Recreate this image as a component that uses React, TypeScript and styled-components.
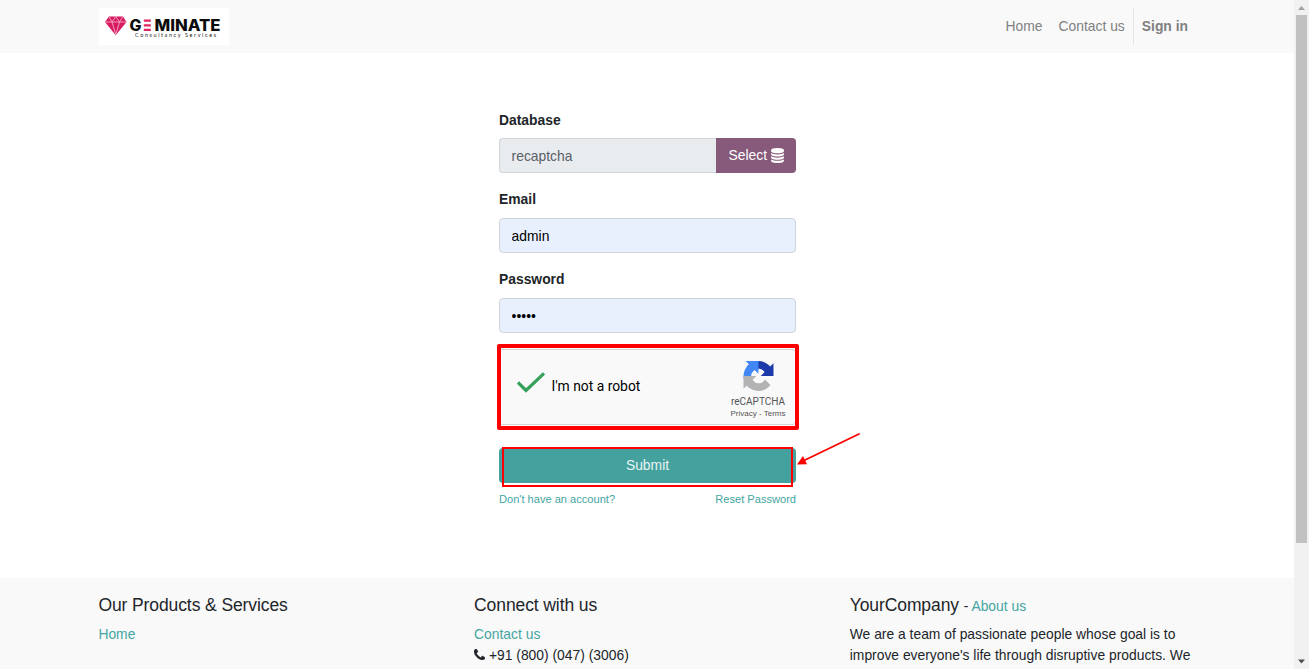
import React from "react";
import styled, { createGlobalStyle } from "styled-components";

const GlobalStyle = createGlobalStyle`
  *, *::before, *::after { box-sizing: border-box; }
  html, body { margin: 0; padding: 0; overflow: hidden; }
  body {
    font-family: "Liberation Sans", Arial, sans-serif;
    font-size: 13.86px;
    line-height: 21px;
    color: #212529;
    background: #fff;
  }
  button, input { font-family: inherit; }
`;

const Window = styled.div`
  display: flex;
  width: 1309px;
  height: 669px;
  overflow: hidden;
`;

const Page = styled.div`
  display: flex;
  flex-direction: column;
  width: 1294px;
  height: 669px;
  overflow: hidden;
`;

const Header = styled.header`
  display: flex;
  justify-content: space-between;
  align-items: flex-start;
  flex: none;
  height: 53px;
  padding: 8px 98px 0 98px;
  background: #f9f9f9;
`;

const Brand = styled.a`
  display: block;
  width: 130px;
  height: 37px;
  margin-left: 0.5px;
  background: #fff;
  svg { display: block; }
`;

const Nav = styled.nav`
  display: flex;
  height: 37px;
`;

const NavLink = styled.a<{ $strong?: boolean }>`
  padding: 8px;
  color: #808080;
  white-space: nowrap;
  font-weight: ${(p) => (p.$strong ? 700 : 400)};
  border-left: ${(p) => (p.$strong ? "1px solid #e6e6e6" : "0")};
`;

const Main = styled.main`
  display: flex;
  flex: none;
  height: 525px;
  padding: 57px 0 0 499px;
`;

const Form = styled.form`
  display: flex;
  flex-direction: column;
  width: 297px;
`;

const Field = styled.div`
  display: flex;
  flex-direction: column;
  height: 80px;

  & + & > label {
    margin-top: -1px;
    margin-bottom: 8px;
  }
`;

const Label = styled.label`
  height: 21px;
  margin-bottom: 7px;
  font-weight: 700;
`;

const InputGroup = styled.div`
  display: flex;
`;

const Input = styled.input<{ $locked?: boolean }>`
  flex: 1;
  min-width: 0;
  height: 35px;
  padding: 0 11.6px;
  font-size: 13.86px;
  border: 1px solid #ced4da;
  border-radius: ${(p) => (p.$locked ? "4px 0 0 4px" : "4px")};
  border-right-width: ${(p) => (p.$locked ? 0 : "1px")};
  color: ${(p) => (p.$locked ? "#5a6067" : "#000")};
  background: ${(p) => (p.$locked ? "#e9ecef" : "#e8f0fe")};
  outline: none;
`;

const SelectButton = styled.button`
  display: flex;
  align-items: center;
  justify-content: center;
  gap: 3.5px;
  width: 80px;
  height: 35px;
  padding: 0 0 1px;
  border: 0;
  border-radius: 0 4px 4px 0;
  color: #fff;
  font-size: 13.86px;
  background: #875a7b;
`;

const CaptchaWrap = styled.div`
  position: relative;
  height: 75px;
  margin-top: -1px;
`;

const Captcha = styled.div`
  display: flex;
  justify-content: space-between;
  height: 76px;
  border: 1px solid #d3d3d3;
  border-radius: 3px;
  background: #f9f9f9;
`;

const CaptchaCheck = styled.div`
  display: flex;
  align-items: center;
  gap: 6px;
  padding: 0 0 2px 16.5px;
  color: #000;
  font-family: Roboto, sans-serif;
  font-size: 13.86px;
  svg { margin-top: -6px; }
`;

const CaptchaBadge = styled.div`
  display: flex;
  flex-direction: column;
  align-items: center;
  width: 74px;
  padding-top: 11px;
  color: #555;
  svg { display: block; }
`;

const BadgeName = styled.div`
  margin-top: 4px;
  font-family: Roboto, sans-serif;
  font-size: 10px;
  line-height: 13px;
`;

const BadgeLinks = styled.div`
  margin-top: 1px;
  font-size: 8px;
  line-height: 10px;
  white-space: nowrap;
`;

const CaptchaHighlight = styled.div`
  position: absolute;
  left: -2px;
  top: -5px;
  width: 302px;
  height: 86px;
  border: 4px solid #f00;
  border-radius: 2px;
`;

const SubmitWrap = styled.div`
  position: relative;
  margin-top: 24px;
`;

const SubmitButton = styled.button`
  display: block;
  width: 297px;
  height: 35px;
  padding: 0 0 1px;
  border: 0;
  border-radius: 4px;
  color: #e9f5f4;
  font-size: 13.86px;
  background: #44a19e;
`;

const SubmitHighlight = styled.div`
  position: absolute;
  left: 3px;
  top: -1px;
  width: 291px;
  height: 40px;
  border: 2px solid #f00;
`;

const Arrow = styled.svg`
  position: absolute;
  left: 297px;
  top: -17px;
`;

const FormLinks = styled.div`
  display: flex;
  justify-content: space-between;
  margin-top: 8px;
  font-size: 11.09px;
  line-height: 16px;
`;

const Link = styled.a`
  color: #44a5a2;
`;

const Footer = styled.footer`
  display: flex;
  flex: none;
  height: 91px;
  padding: 17px 0 0 98.4px;
  background: #f9f9f9;
  overflow: hidden;
`;

const FooterColumn = styled.section`
  width: 375.7px;
  white-space: nowrap;
`;

const FooterTitle = styled.h5`
  height: 21px;
  margin: 0 0 8px;
  font-size: 17.5px;
  font-weight: 400;
  line-height: 20px;
  letter-spacing: -0.1px;
`;

const Small = styled.span`
  font-size: 13.86px;
  letter-spacing: 0;
`;

const Line = styled.div`
  height: 21px;
  svg { vertical-align: 0; }
`;

const Scrollbar = styled.div`
  display: flex;
  flex-direction: column;
  align-items: center;
  justify-content: space-between;
  width: 15px;
  height: 669px;
  background: #f1f1f1;
  svg { display: block; flex: none; }
`;

const ScrollThumb = styled.div`
  width: 11px;
  height: 528px;
  margin-bottom: auto;
  background: #c1c1c1;
`;

const Logo = () => (
  <svg width="130" height="37" viewBox="0.5 0 130 37">
    <path d="M10.5 8.5h14l3.5 5.5-10.8 13.3L6.5 14z" fill="#d81b60" />
    <path d="M6.5 14h21.5M10.5 8.5l3 5.5 3.8-5.5 3.7 5.5 3.5-5.5M13.5 14l3.8 12.5L21 14" fill="none" stroke="#f7a8c4" strokeWidth=".9" />
    <g fontFamily="Inter, sans-serif" fontWeight="800" fontSize="15.5" fill="#0c0c0c">
      <text x="31" y="23" textLength="12" lengthAdjust="spacingAndGlyphs">G</text>
      <text x="56" y="23" textLength="66" lengthAdjust="spacingAndGlyphs">MINATE</text>
    </g>
    <path d="M45.3 12.7h7M45.3 17.3h7M45.3 21.9h7" stroke="#e0245e" strokeWidth="2.2" />
    <text x="36.5" y="28.7" fontFamily="Lato, sans-serif" fontSize="5.4" fill="#222" textLength="81">
      Consultancy Services
    </text>
  </svg>
);

const DatabaseIcon = () => (
  <svg width="13" height="15" viewBox="0 0 1536 1792" fill="currentColor">
    <path d="M768 768q237 0 443-43t325-127v170q0 69-103 128t-280 93.500-385 34.500-385-34.500-280-93.500-103-128v-170q119 84 325 127t443 43zm0 768q237 0 443-43t325-127v170q0 69-103 128t-280 93.500-385 34.500-385-34.500-280-93.500-103-128v-170q119 84 325 127t443 43zm0-384q237 0 443-43t325-127v170q0 69-103 128t-280 93.500-385 34.500-385-34.500-280-93.500-103-128v-170q119 84 325 127t443 43zm0-1152q208 0 385 34.500t280 93.500 103 128v128q0 69-103 128t-280 93.500-385 34.500-385-34.500-280-93.500-103-128v-128q0-69 103-128t280-93.500 385-34.500z" />
  </svg>
);

const PhoneIcon = () => (
  <svg width="11" height="11" viewBox="192 128 1408 1408" fill="currentColor" stroke="currentColor" strokeWidth="50">
    <path d="M1600 1240q0 27-10 70.500t-21 68.500q-21 50-122 106-94 51-186 51-27 0-53-3.500t-57.500-12.500-47-14.500-55.500-20.500-49-18q-98-35-175-83-127-79-264-216t-216-264q-48-77-83-175-3-9-18-49t-20.500-55.500-14.500-47-12.500-57.500-3.500-53q0-92 51-186 56-101 106-122 25-11 68.500-21t70.500-10q14 0 21 3 18 6 53 76 11 19 30 54t35 63.500 31 53.500q3 4 17.500 25t21.500 35.500 7 28.500q0 20-28.500 50t-62 55-62 53-28.500 46q0 9 5 22.500t8.500 20.500 14 24 11.500 19q76 137 174 235t235 174q2 1 19 11.500t24 14 20.500 8.500 22.500 5q18 0 46-28.500t53-62 55-62 50-28.500q14 0 28.500 7t35.500 21.500 25 17.500q25 15 53.500 31t63.500 35 54 30q70 35 76 53 3 7 3 21z" />
  </svg>
);

const RecaptchaIcon = () => (
  <svg width="31" height="30" viewBox="0 0 64 64">
    <path fill="#1c3aa9" d="M64 31.955l-.033-1.370V4.687l-7.160 7.160C50.948 4.674 42.033.093 32.050.093c-10.400 0-19.622 4.960-25.458 12.640l11.736 11.860a15.550 15.550 0 0 1 4.754-5.334c2.050-1.600 4.952-2.906 8.968-2.906.485 0 .860.057 1.135.163 4.976.393 9.288 3.140 11.828 7.124l-8.307 8.307L64 31.953" />
    <path fill="#4285f4" d="M31.862.094l-1.370.033H4.594l7.160 7.160C4.580 13.147 0 22.060 0 32.046c0 10.400 4.960 19.622 12.640 25.458L24.500 45.768a15.550 15.550 0 0 1-5.334-4.754c-1.600-2.050-2.906-4.952-2.906-8.968 0-.485.057-.860.163-1.135.393-4.976 3.140-9.288 7.124-11.828l8.307 8.307L31.860.095" />
    <path fill="#b3b3b3" d="M.001 32.045l.033 1.370v25.898l7.160-7.160c5.860 7.173 14.774 11.754 24.760 11.754 10.400 0 19.622-4.960 25.458-12.640l-11.736-11.860a15.550 15.550 0 0 1-4.754 5.334c-2.050 1.600-4.952 2.906-8.968 2.906-.485 0-.860-.057-1.135-.163-4.976-.393-9.288-3.140-11.828-7.124l8.307-8.307c-10.522.040-22.400.066-27.295-.005" />
  </svg>
);

export default function App() {
  return (
    <Window>
      <GlobalStyle />
      <Page>
        <Header>
          <Brand><Logo /></Brand>
          <Nav>
            <NavLink>Home</NavLink>
            <NavLink>Contact us</NavLink>
            <NavLink $strong>Sign in</NavLink>
          </Nav>
        </Header>
        <Main>
          <Form>
            <Field>
              <Label>Database</Label>
              <InputGroup>
                <Input $locked readOnly value="recaptcha" />
                <SelectButton type="button">Select <DatabaseIcon /></SelectButton>
              </InputGroup>
            </Field>
            <Field>
              <Label>Email</Label>
              <InputGroup><Input readOnly value="admin" /></InputGroup>
            </Field>
            <Field>
              <Label>Password</Label>
              <InputGroup><Input type="password" readOnly value="admin" /></InputGroup>
            </Field>
            <CaptchaWrap>
              <Captcha>
                <CaptchaCheck>
                  <svg width="29" height="22" viewBox="0 0 29 22">
                    <path d="M1 10.5L9 18.500 27 1.300" fill="none" stroke="#35a05a" strokeWidth="3.200" />
                  </svg>
                  I'm not a robot
                </CaptchaCheck>
                <CaptchaBadge>
                  <RecaptchaIcon />
                  <BadgeName>reCAPTCHA</BadgeName>
                  <BadgeLinks>Privacy - Terms</BadgeLinks>
                </CaptchaBadge>
              </Captcha>
              <CaptchaHighlight />
            </CaptchaWrap>
            <SubmitWrap>
              <SubmitButton type="button">Submit</SubmitButton>
              <SubmitHighlight />
              <Arrow width="68" height="38" viewBox="0 0 68 38">
                <path d="M63 3L8 29.500" stroke="#f00" strokeWidth="1.800" strokeLinecap="round" />
                <path d="M1 33.500L7 25 11 33.300z" fill="#f00" />
              </Arrow>
            </SubmitWrap>
            <FormLinks>
              <Link>Don't have an account?</Link>
              <Link>Reset Password</Link>
            </FormLinks>
          </Form>
        </Main>
        <Footer>
          <FooterColumn>
            <FooterTitle>Our Products &amp; Services</FooterTitle>
            <Line><Link>Home</Link></Line>
          </FooterColumn>
          <FooterColumn>
            <FooterTitle>Connect with us</FooterTitle>
            <Line><Link>Contact us</Link></Line>
            <Line><PhoneIcon /> +91 (800) (047) (3006)</Line>
          </FooterColumn>
          <FooterColumn>
            <FooterTitle>YourCompany <Small>- <Link>About us</Link></Small></FooterTitle>
            <Line>We are a team of passionate people whose goal is to</Line>
            <Line>improve everyone's life through disruptive products. We</Line>
          </FooterColumn>
        </Footer>
      </Page>
      <Scrollbar>
        <svg width="15" height="15"><path d="M4 10L7.500 6 11 10z" fill="#a3a3a3" /></svg>
        <ScrollThumb />
        <svg width="15" height="15"><path d="M4 5.500L7.500 9.500 11 5.500z" fill="#505050" /></svg>
      </Scrollbar>
    </Window>
  );
}
